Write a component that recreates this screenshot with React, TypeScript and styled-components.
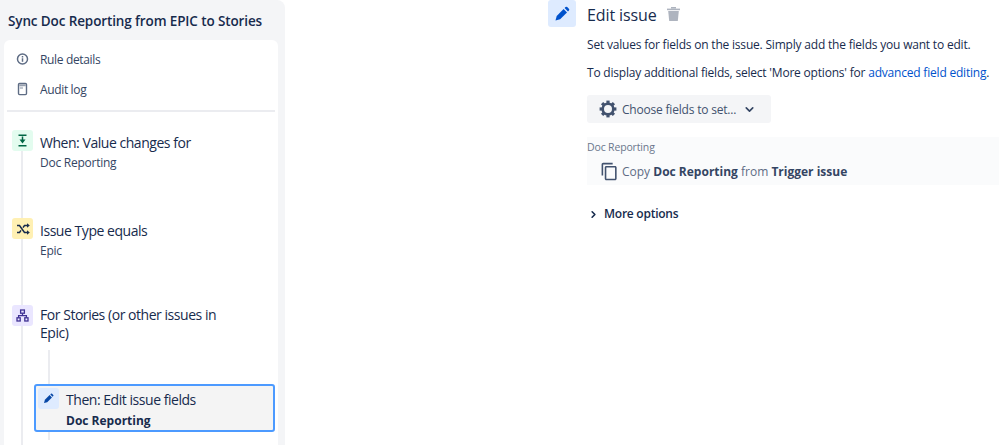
import React from 'react';
import styled, { createGlobalStyle } from 'styled-components';
import { ChevronDown, ChevronRight } from 'lucide-react';
import { MdOutlineContentCopy } from 'react-icons/md';

const GlobalStyle = createGlobalStyle`
  html, body {
    margin: 0;
    padding: 0;
    background: #fff;
    overflow: hidden;
  }
  body {
    font-family: "Open Sans", "Noto Sans", "Liberation Sans", sans-serif;
    color: #172b4d;
  }
`;

const Page = styled.div`
  display: flex;
  width: 999px;
  height: 445px;
  overflow: hidden;
`;

const Sidebar = styled.aside`
  width: 285px;
  height: 445px;
  flex: none;
  box-sizing: border-box;
  padding: 0 7px 0 4px;
  background: #f4f5f7;
  border-top-right-radius: 8px;
`;

const RuleTitle = styled.h1`
  margin: 0;
  height: 40px;
  padding-left: 4px;
  font-size: 13.5px;
  line-height: 42px;
  font-weight: 600;
  letter-spacing: -0.12px;
  white-space: nowrap;
`;

const Card = styled.div`
  position: relative;
  height: 405px;
  background: #fff;
  border-radius: 6px 6px 0 0;
  padding: 4px 3px 0;
  box-sizing: border-box;
`;

const NavRow = styled.div`
  display: flex;
  align-items: center;
  height: 30px;
  padding-left: 9px;
  gap: 11px;
  font-size: 12px;
  color: #344563;
  letter-spacing: -0.35px;
`;

const NavIcon = styled.svg`
  width: 13px;
  height: 14px;
  flex: none;
`;

const Divider = styled.hr`
  margin: 6px 0 0;
  border: 0;
  height: 2px;
  background: #ebecf0;
`;

const Steps = styled.div`
  position: relative;
  padding: 18px 0 0 5px;
`;

const Spine = styled.span`
  position: absolute;
  left: 14px;
  top: 39px;
  width: 2px;
  height: 300px;
  background: #ebecf0;
`;

const InnerSpine = styled.span`
  position: absolute;
  left: 41px;
  top: 238px;
  width: 2px;
  height: 90px;
  background: #ebecf0;
`;

const Step = styled.div<{ $height: number }>`
  position: relative;
  display: flex;
  gap: 7px;
  height: ${(p) => p.$height}px;
`;

const Badge = styled.span<{ $bg: string; $fg: string }>`
  flex: none;
  display: flex;
  align-items: center;
  justify-content: center;
  width: 21px;
  height: 21px;
  border-radius: 3px;
  background: ${(p) => p.$bg};
  color: ${(p) => p.$fg};
`;

const StepText = styled.div<{ $top: number }>`
  padding-top: ${(p) => p.$top}px;
  width: 190px;
`;

const StepTitle = styled.div`
  font-size: 14px;
  line-height: 18px;
  letter-spacing: -0.46px;
`;

const StepSub = styled.div<{ $bold?: boolean; $gap: number }>`
  margin-top: ${(p) => p.$gap}px;
  font-size: 12px;
  line-height: 17px;
  letter-spacing: ${(p) => (p.$bold ? '0' : '-0.25px')};
  font-weight: ${(p) => (p.$bold ? 700 : 400)};
  color: ${(p) => (p.$bold ? '#172b4d' : '#344563')};
`;

const SelectedStep = styled.div`
  position: relative;
  display: flex;
  gap: 7px;
  box-sizing: border-box;
  width: 241px;
  height: 48px;
  margin: 0 0 0 22px;
  padding: 2px;
  border: 2px solid #4c9aff;
  border-radius: 3px;
  background: #f4f4f4;
`;

const Main = styled.main`
  flex: 1;
  display: flex;
  gap: 11px;
  padding-left: 263px;
  min-width: 0;
`;

const EditBadge = styled(Badge)`
  width: 28px;
  height: 27px;
`;

const Content = styled.div`
  flex: 1;
  min-width: 0;
`;

const HeadingRow = styled.div`
  display: flex;
  align-items: center;
  gap: 9px;
  height: 30px;
`;

const Heading = styled.h2`
  margin: 0;
  font-size: 16px;
  font-weight: 400;
  letter-spacing: -0.1px;
`;

const TrashIcon = styled.svg`
  display: block;
  width: 15px;
  height: 16px;
  margin-top: -3px;
`;

const Paragraph = styled.p`
  margin: 0;
  font-size: 12px;
  line-height: 16px;
  letter-spacing: -0.2px;
  white-space: nowrap;
  color: #172b4d;
  & + & {
    margin-top: 12px;
  }
`;

const Intro = styled.div`
  padding-top: 7px;
`;

const LinkText = styled.a`
  color: #0052cc;
`;

const ChooseButton = styled.button`
  display: flex;
  align-items: center;
  width: 184px;
  height: 28px;
  margin-top: 14px;
  padding: 0 0 0 12px;
  border: 0;
  border-radius: 3px;
  background: #f4f5f7;
  color: #42526e;
  font: inherit;
  font-size: 12px;
  letter-spacing: -0.2px;
`;

const ButtonLabel = styled.span`
  margin: 0 7px 0 5px;
`;

const FieldBlock = styled.div`
  margin-top: 14px;
  height: 48px;
  background: #fafbfc;
  box-sizing: border-box;
  padding-top: 3px;
`;

const FieldLabel = styled.div`
  font-size: 10.5px;
  line-height: 14px;
  font-weight: 500;
  letter-spacing: -0.15px;
  color: #6b778c;
`;

const FieldValue = styled.div`
  display: flex;
  align-items: center;
  gap: 3px;
  margin: 8px 0 0 13px;
  font-size: 12px;
  color: #5e6c84;
  white-space: nowrap;
  & b {
    color: #344563;
    font-weight: 700;
  }
`;

const MoreOptions = styled.div`
  display: flex;
  align-items: center;
  gap: 5px;
  margin-top: 21px;
  padding-left: 1px;
  font-size: 12px;
  line-height: 16px;
  font-weight: 600;
  letter-spacing: -0.25px;
`;

const InfoGlyph = () => (
  <NavIcon viewBox="0 0 14 14" fill="none">
    <circle cx="7" cy="7" r="5.4" stroke="#5e6c84" strokeWidth="1.6" />
    <rect x="6.2" y="6.2" width="1.6" height="3.8" fill="#5e6c84" />
    <rect x="6.2" y="3.8" width="1.6" height="1.6" fill="#5e6c84" />
  </NavIcon>
);

const AuditGlyph = () => (
  <NavIcon viewBox="0 0 14 14" fill="none">
    <rect x="2.7" y="1" width="8.6" height="12" rx="1.2" stroke="#5e6c84" strokeWidth="1.5" />
    <rect x="3.5" y="2" width="7" height="2" fill="#97a0af" />
    <rect x="4" y="4.5" width="3.5" height="2.5" fill="#c1c7d0" />
  </NavIcon>
);

const TriggerGlyph = () => (
  <svg width="13" height="13" viewBox="0 0 13 13" fill="none">
    <path d="M2.5 1.2h8M2.5 11.8h8" stroke="#006644" strokeWidth="1.5" />
    <path d="M6.5 2.5v4" stroke="#006644" strokeWidth="1.5" />
    <path d="M3.5 5.5h6L6.5 9.5z" fill="#006644" />
  </svg>
);

const ShuffleGlyph = () => (
  <svg width="14" height="12" viewBox="0 0 14 12" fill="none">
    <path d="M1 2.5h2.5l5 7H12M1 9.5h2.5l1.5-2.2M7 4.7l1.5-2.2H12" stroke="#172b4d" strokeWidth="1.5" />
    <path d="M11 .3l2.8 2.2L11 4.7zM11 7.3l2.8 2.2L11 11.7z" fill="#172b4d" />
  </svg>
);

const TreeGlyph = () => (
  <svg width="13" height="13" viewBox="0 0 13 13" fill="none" stroke="#403294" strokeWidth="1.3">
    <rect x="4.6" y="1" width="3.8" height="3.2" />
    <rect x="1" y="8.8" width="3.2" height="3.2" />
    <rect x="8.8" y="8.8" width="3.2" height="3.2" />
    <path d="M6.5 4.2v2.4M2.6 8.8V6.6h7.8v2.2" />
  </svg>
);

const PenGlyph = ({ size }: { size: number }) => (
  <svg width={size} height={size} viewBox="0 0 16 16" fill="currentColor">
    <path d="M1.5 14.5l1.2-4.6 6.9-6.9 3.4 3.4-6.9 6.9z" />
    <path d="M10.6 2l.9-.9a1.2 1.2 0 0 1 1.7 0l1.7 1.7a1.2 1.2 0 0 1 0 1.7l-.9.9z" />
  </svg>
);

const GearGlyph = () => (
  <svg width="18" height="18" viewBox="0 0 18 18" fill="none">
    <circle cx="9" cy="9" r="5.3" stroke="#42526e" strokeWidth="2.6" />
    {[0, 45, 90, 135, 180, 225, 270, 315].map((angle) => (
      <rect key={angle} x="7.4" y="0.6" width="3.2" height="3" fill="#42526e" transform={`rotate(${angle} 9 9)`} />
    ))}
  </svg>
);

export default function App() {
  return (
    <>
      <GlobalStyle />
      <Page>
        <Sidebar>
          <RuleTitle>Sync Doc Reporting from EPIC to Stories</RuleTitle>
          <Card>
            <NavRow>
              <InfoGlyph />
              Rule details
            </NavRow>
            <NavRow>
              <AuditGlyph />
              Audit log
            </NavRow>
            <Divider />
            <Steps>
              <Spine />
              <InnerSpine />
              <Step $height={88}>
                <Badge $bg="#e3fcef" $fg="#006644">
                  <TriggerGlyph />
                </Badge>
                <StepText $top={4}>
                  <StepTitle>When: Value changes for</StepTitle>
                  <StepSub $gap={2}>Doc Reporting</StepSub>
                </StepText>
              </Step>
              <Step $height={87}>
                <Badge $bg="#fff0b3" $fg="#172b4d">
                  <ShuffleGlyph />
                </Badge>
                <StepText $top={4}>
                  <StepTitle>Issue Type equals</StepTitle>
                  <StepSub $gap={2}>Epic</StepSub>
                </StepText>
              </Step>
              <Step $height={79}>
                <Badge $bg="#eae6ff" $fg="#403294">
                  <TreeGlyph />
                </Badge>
                <StepText $top={1}>
                  <StepTitle>For Stories (or other issues in Epic)</StepTitle>
                </StepText>
              </Step>
              <SelectedStep>
                <Badge $bg="#deebff" $fg="#0747a6">
                  <PenGlyph size={11} />
                </Badge>
                <StepText $top={3}>
                  <StepTitle>Then: Edit issue fields</StepTitle>
                  <StepSub $bold $gap={3}>Doc Reporting</StepSub>
                </StepText>
              </SelectedStep>
            </Steps>
          </Card>
        </Sidebar>
        <Main>
          <EditBadge $bg="#deebff" $fg="#0052cc">
            <PenGlyph size={16} />
          </EditBadge>
          <Content>
            <HeadingRow>
              <Heading>Edit issue</Heading>
              <TrashIcon viewBox="0 0 15 16" fill="#aeb4bf">
                <path d="M1 2.6h13v1.6H1z" />
                <path d="M5 1h5v1.6H5z" />
                <path d="M2.2 5h10.6l-1 10H3.2z" />
              </TrashIcon>
            </HeadingRow>
            <Intro>
              <Paragraph>Set values for fields on the issue. Simply add the fields you want to edit.</Paragraph>
              <Paragraph>
                To display additional fields, select 'More options' for <LinkText>advanced field editing</LinkText>.
              </Paragraph>
            </Intro>
            <ChooseButton>
              <GearGlyph />
              <ButtonLabel>Choose fields to set...</ButtonLabel>
              <ChevronDown size={13} strokeWidth={3} color="#344563" />
            </ChooseButton>
            <FieldBlock>
              <FieldLabel>Doc Reporting</FieldLabel>
              <FieldValue>
                <MdOutlineContentCopy size={19} color="#42526e" />
                <span>
                  Copy <b>Doc Reporting</b> from <b>Trigger issue</b>
                </span>
              </FieldValue>
            </FieldBlock>
            <MoreOptions>
              <ChevronRight size={11} strokeWidth={3.5} color="#172b4d" />
              More options
            </MoreOptions>
          </Content>
        </Main>
      </Page>
    </>
  );
}
